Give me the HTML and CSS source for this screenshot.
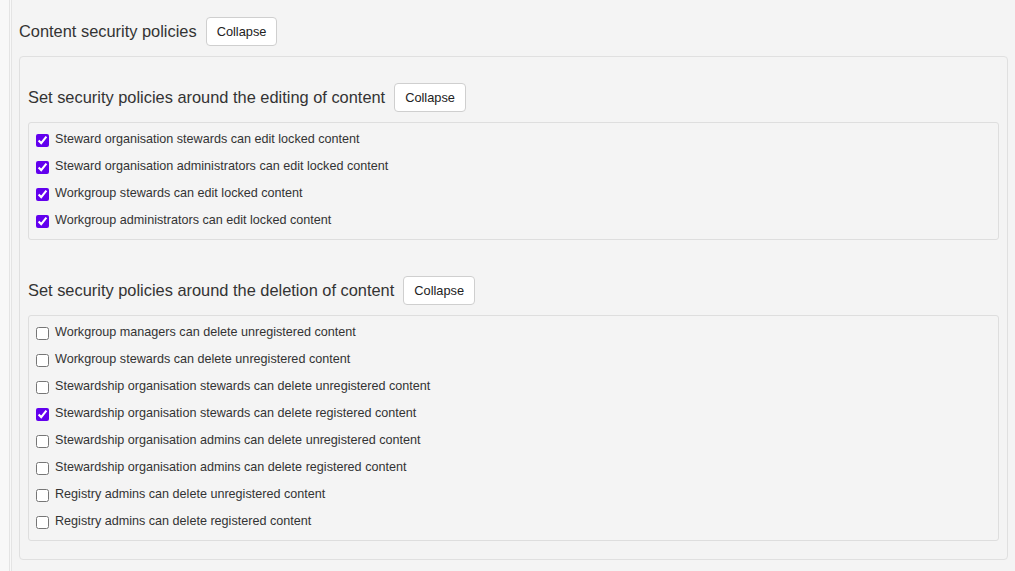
FILE: index.html
```html
<!DOCTYPE html>
<html>
<head>
<meta charset="utf-8">
<link rel="stylesheet" href="styles.css">
</head>
<body>
<div class="frame">
  <div class="frame-inner">
    <div class="head-row">
      <h2 class="title">Content security policies</h2>
      <button class="btn">Collapse</button>
    </div>
    <div class="panel">
      <div class="section">
        <div class="head-row">
          <h3 class="subtitle">Set security policies around the editing of content</h3>
          <button class="btn">Collapse</button>
        </div>
        <div class="box">
          <label class="row"><input type="checkbox" checked><span>Steward organisation stewards can edit locked content</span></label>
          <label class="row"><input type="checkbox" checked><span>Steward organisation administrators can edit locked content</span></label>
          <label class="row"><input type="checkbox" checked><span>Workgroup stewards can edit locked content</span></label>
          <label class="row"><input type="checkbox" checked><span>Workgroup administrators can edit locked content</span></label>
        </div>
      </div>
      <div class="section">
        <div class="head-row">
          <h3 class="subtitle">Set security policies around the deletion of content</h3>
          <button class="btn">Collapse</button>
        </div>
        <div class="box">
          <label class="row"><input type="checkbox"><span>Workgroup managers can delete unregistered content</span></label>
          <label class="row"><input type="checkbox"><span>Workgroup stewards can delete unregistered content</span></label>
          <label class="row"><input type="checkbox"><span>Stewardship organisation stewards can delete unregistered content</span></label>
          <label class="row"><input type="checkbox" checked><span>Stewardship organisation stewards can delete registered content</span></label>
          <label class="row"><input type="checkbox"><span>Stewardship organisation admins can delete unregistered content</span></label>
          <label class="row"><input type="checkbox"><span>Stewardship organisation admins can delete registered content</span></label>
          <label class="row"><input type="checkbox"><span>Registry admins can delete unregistered content</span></label>
          <label class="row"><input type="checkbox"><span>Registry admins can delete registered content</span></label>
        </div>
      </div>
    </div>
  </div>
</div>
</body>
</html>
```
FILE: styles.css
```css
html, body {
  margin: 0;
  padding: 0;
  background: #f8f8f8;
  font-family: "Liberation Sans", Arial, sans-serif;
  color: #333;
}
.frame {
  margin-left: 9px;
  border-left: 1px solid #e4e4e4;
  min-height: 571px;
  background: #f8f8f8;
}
.frame-inner {
  margin-left: 1px;
  border-left: 1px solid #e4e4e4;
  background: #f4f4f4;
  min-height: 571px;
  padding: 17px 7px 12px 7px;
  box-sizing: border-box;
}
.head-row {
  display: flex;
  align-items: center;
  gap: 9px;
}
.title {
  margin: 0;
  font-size: 16.4px;
  font-weight: normal;
  color: #333;
}
.subtitle {
  margin: 0;
  font-size: 16.4px;
  font-weight: normal;
  color: #333;
}
.btn {
  height: 29px;
  padding: 0 10px;
  background: #fff;
  border: 1px solid #cfcfcf;
  border-radius: 4px;
  font-family: "Liberation Sans", Arial, sans-serif;
  font-size: 12.8px;
  color: #222;
}
.panel {
  margin-top: 10px;
  border: 1px solid #e0e0e0;
  border-radius: 4px;
  padding: 0 8px 18px 8px;
}
.section {
  padding-top: 26px;
}
.section + .section {
  padding-top: 36px;
}
.section .head-row {
  margin-bottom: 10px;
}
.box {
  border: 1px solid #dedede;
  border-radius: 3px;
  padding: 4px 0 4px 7px;
}
.row {
  display: flex;
  align-items: center;
  height: 27px;
  font-size: 12.6px;
  color: #333;
}
.row span {
  padding-bottom: 4px;
}
.row input {
  margin: 0 6px 0 0;
  width: 13px;
  height: 13px;
  accent-color: #6200ee;
}
```
